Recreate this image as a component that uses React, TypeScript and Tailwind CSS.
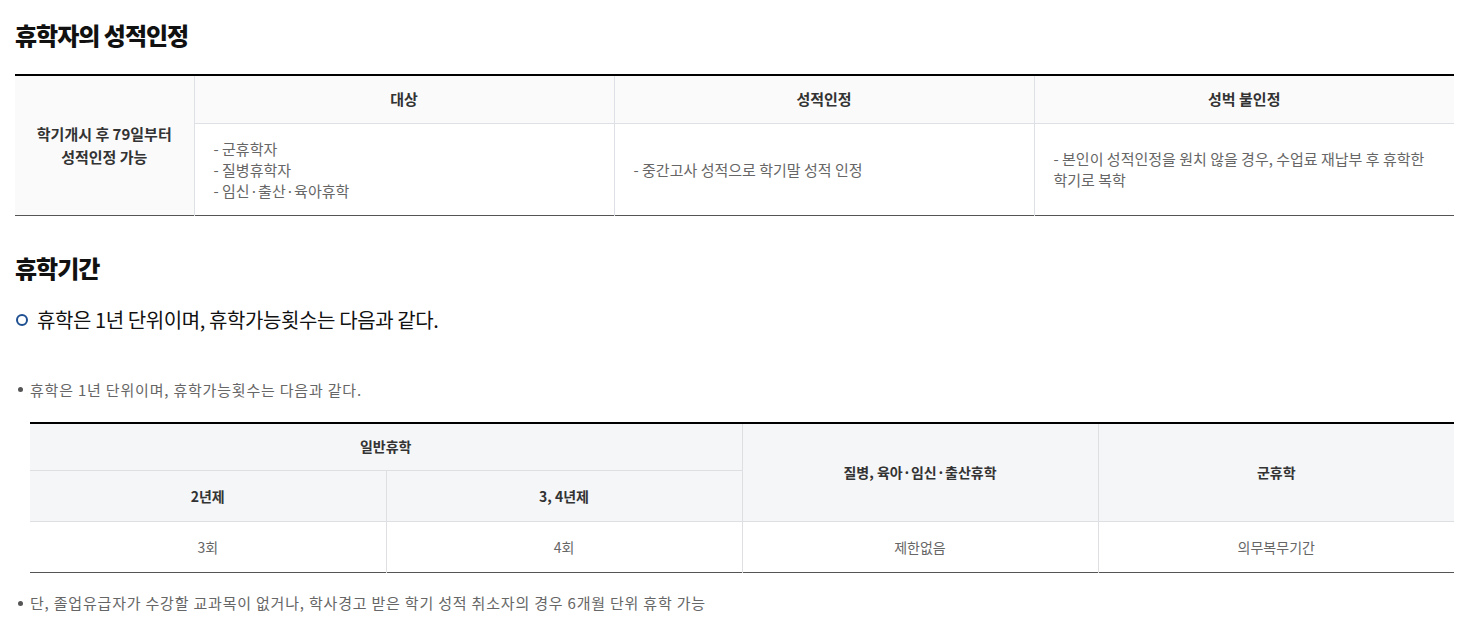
// 휴학 안내 페이지: 휴학자의 성적인정 표와 휴학기간 표

const font = { fontFamily: '"Noto Sans CJK KR", "Noto Sans", sans-serif' }

interface GradeRow {
    label: string[] // 왼쪽 구분
    targets: string[] // 대상
    approve: string // 성적인정
    reject: string[] // 성적 불인정
}

const gradeRow: GradeRow = {
    label: ["학기개시 후 79일부터", "성적인정 가능"],
    targets: ["- 군휴학자", "- 질병휴학자", "- 임신·출산·육아휴학"],
    approve: "- 중간고사 성적으로 학기말 성적 인정",
    reject: ["- 본인이 성적인정을 원치 않을 경우, 수업료 재납부 후 휴학한", "학기로 복학"],
}

function Bullet({ children }: { children: React.ReactNode }) {
    return (
        <p className="flex items-center gap-[7px] text-[15px] leading-[20px] text-[#666] tracking-[0.8px]">
            <span className="ml-[3px] w-[5px] h-[5px] rounded-full bg-[#555] flex-shrink-0" />
            {children}
        </p>
    )
}

export default function App() {
    return (
        <div className="bg-white w-[1481px] h-[618px] overflow-hidden px-[15px] pt-[20px]" style={font}>
            {/* 휴학자의 성적인정 */}
            <h2 className="text-[24px] leading-[30px] font-black text-[#111] tracking-[-1px]">휴학자의 성적인정</h2>

            <table className="mt-[24px] w-[1439px] table-fixed border-collapse border-t-2 border-t-black border-b border-b-[#555]">
                <colgroup>
                    <col className="w-[179px]" />
                    <col className="w-[420px]" />
                    <col className="w-[420px]" />
                    <col className="w-[420px]" />
                </colgroup>
                <tbody>
                    <tr className="h-[48px]">
                        <th
                            rowSpan={2}
                            className="bg-[#fafafa] border-r border-[#dde1e6] text-[15px] leading-[23px] font-bold text-[#333] align-middle"
                        >
                            {gradeRow.label.map((l) => (
                                <div key={l}>{l}</div>
                            ))}
                        </th>
                        {["대상", "성적인정", "성벅 불인정"].map((h, i) => (
                            <th
                                key={h}
                                className={`bg-[#fafafa] border-b border-[#dde1e6] text-[15px] font-bold text-[#333] ${i < 2 ? "border-r" : ""}`}
                            >
                                {h}
                            </th>
                        ))}
                    </tr>
                    <tr className="h-[92px]">
                        <td className="border-r border-[#dde1e6] pl-[19px] text-[15px] leading-[21px] text-[#666]">
                            {gradeRow.targets.map((t) => (
                                <div key={t}>{t}</div>
                            ))}
                        </td>
                        <td className="border-r border-[#dde1e6] pl-[19px] text-[15px] leading-[21px] text-[#666]">
                            {gradeRow.approve}
                        </td>
                        <td className="pl-[19px] text-[15px] leading-[21px] text-[#666]">
                            {gradeRow.reject.map((r) => (
                                <div key={r}>{r}</div>
                            ))}
                        </td>
                    </tr>
                </tbody>
            </table>

            {/* 휴학기간 */}
            <h2 className="mt-[37px] text-[24px] leading-[30px] font-black text-[#111] tracking-[-1px]">휴학기간</h2>

            <p className="mt-[23px] flex items-center gap-[9px] text-[20px] leading-[28px] text-[#111] tracking-[-0.4px]">
                <span className="ml-[1px] w-[12px] h-[12px] rounded-full border-2 border-[#1d4f91] flex-shrink-0" />
                휴학은 1년 단위이며, 휴학가능횟수는 다음과 같다.
            </p>

            <div className="mt-[46px]">
                <Bullet>휴학은 1년 단위이며, 휴학가능횟수는 다음과 같다.</Bullet>
            </div>

            <table className="mt-[22px] ml-[15px] w-[1424px] table-fixed border-collapse border-t-2 border-t-black border-b border-b-[#555]">
                <thead>
                    <tr className="h-[48px]">
                        <th colSpan={2} className="bg-[#f5f6f8] border-r border-b border-[#dddfe3] text-[14px] font-bold text-[#333]">
                            일반휴학
                        </th>
                        <th rowSpan={2} className="bg-[#f5f6f8] border-r border-[#dddfe3] text-[14px] font-bold text-[#333]">
                            질병, 육아·임신·출산휴학
                        </th>
                        <th rowSpan={2} className="bg-[#f5f6f8] text-[14px] font-bold text-[#333]">
                            군휴학
                        </th>
                    </tr>
                    <tr className="h-[51px]">
                        <th className="bg-[#f5f6f8] border-r border-[#dddfe3] text-[14px] font-bold text-[#333]">2년제</th>
                        <th className="bg-[#f5f6f8] border-r border-[#dddfe3] text-[14px] font-bold text-[#333]">3, 4년제</th>
                    </tr>
                </thead>
                <tbody>
                    <tr className="h-[51px] border-t border-[#dddfe3]">
                        {["3회", "4회", "제한없음", "의무복무기간"].map((v, i) => (
                            <td
                                key={v}
                                className={`text-center text-[14px] text-[#666] ${i < 3 ? "border-r border-[#dddfe3]" : ""}`}
                            >
                                {v}
                            </td>
                        ))}
                    </tr>
                </tbody>
            </table>

            <div className="mt-[20px]">
                <Bullet>단, 졸업유급자가 수강할 교과목이 없거나, 학사경고 받은 학기 성적 취소자의 경우 6개월 단위 휴학 가능</Bullet>
            </div>
        </div>
    )
}
